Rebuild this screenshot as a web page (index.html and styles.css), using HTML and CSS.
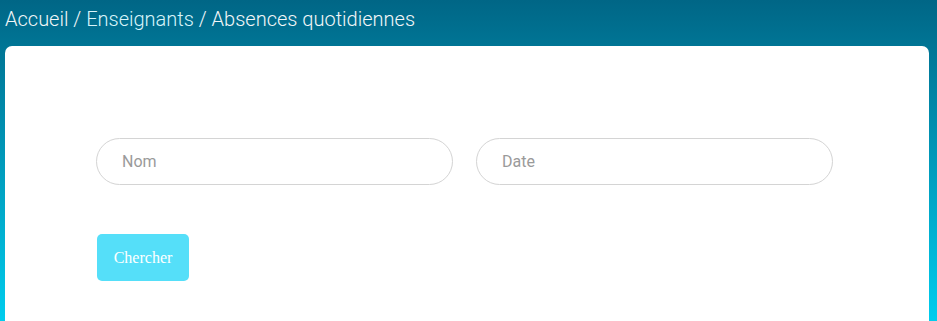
FILE: index.html
```html
<!DOCTYPE html>
<html lang="fr">
<head>
  <meta charset="UTF-8">
  <title>Absences quotidiennes</title>
  <link rel="stylesheet" href="styles.css">
</head>
<body>
  <div class="breadcrumb">
    <a href="#">Accueil</a> / <a href="#" class="current">Enseignants</a> / <span>Absences quotidiennes</span>
  </div>
  <div class="card">
    <form class="search-form">
      <div class="fields">
        <input type="text" placeholder="Nom">
        <input type="text" placeholder="Date">
      </div>
      <button type="button">Chercher</button>
    </form>
  </div>
</body>
</html>
```

FILE: styles.css
```css
html, body {
  height: 100%;
}
body {
  margin: 0;
  padding: 0;
  display: flex;
  flex-direction: column;
  background: linear-gradient(to bottom, #006686, #00cdee);
  font-family: Roboto, "Liberation Sans", Arial, sans-serif;
  overflow: hidden;
}
.breadcrumb {
  flex: none;
  padding: 6px 5px 0;
  height: 46px;
  box-sizing: border-box;
  font-size: 20px;
  font-weight: 300;
  color: #f2f6f8;
  line-height: 26px;
}
.breadcrumb a {
  color: #f2f6f8;
  text-decoration: none;
}
.breadcrumb a.current {
  color: #d8f4fa;
}
.card {
  flex: 1;
  background: #fff;
  margin: 0 8px 0 5px;
  border-radius: 7px 7px 0 0;
  padding: 92px 91px 0;
  box-sizing: border-box;
}
.fields {
  display: flex;
  gap: 23px;
}
.fields input {
  width: 357px;
  height: 47px;
  box-sizing: border-box;
  border: 1px solid #d4d4d4;
  border-radius: 24px;
  padding: 0 25px;
  font-family: Roboto, "Liberation Sans", Arial, sans-serif;
  font-size: 16px;
  color: #555;
  outline: none;
}
.fields input::placeholder {
  color: #9a9a9a;
}
.search-form button {
  margin-top: 49px;
  margin-left: 1px;
  width: 92px;
  height: 47px;
  background: #55dff9;
  border: none;
  border-radius: 5px;
  color: #fff;
  font-family: "Liberation Serif", "Times New Roman", serif;
  font-size: 16px;
  cursor: pointer;
}
```
